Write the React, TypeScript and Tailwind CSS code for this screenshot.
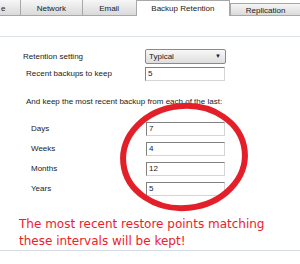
const tabs = [
  { label: "e", w: "w-[21px]", active: false },
  { label: "Network", w: "w-[62px]", active: false },
  { label: "Email", w: "w-[54px]", active: false },
  { label: "Backup Retention", w: "w-[95px]", active: true },
  { label: "Replication", w: "w-[70px]", active: false },
];

const intervals = [
  { label: "Days", value: "7" },
  { label: "Weeks", value: "4" },
  { label: "Months", value: "12" },
  { label: "Years", value: "5" },
];

const Field = ({ value, className }: { value: string; className: string }) => (
  <div
    className={`h-[14px] bg-white border border-t-[#808080] border-l-[#808080] border-r-[#d4d4d4] border-b-[#d4d4d4] flex items-center pl-[2px] ${className}`}
  >
    {value}
  </div>
);

export default function App() {
  return (
    <div
      className="relative w-[300px] h-[264px] overflow-hidden bg-white text-[8px] text-[#1a1a1a]"
      style={{ fontFamily: '"Liberation Sans", Arial, sans-serif' }}
    >
      {/* tab strip */}
      <div className="flex h-[16px] -ml-px">
        {tabs.map((t) =>
          t.active ? (
            <div
              key={t.label}
              className={`${t.w} h-[16px] bg-white border-l border-r border-t border-[#a8a8a8] flex justify-center pt-[2px] text-[8px]`}
            >
              {t.label}
            </div>
          ) : (
            <div
              key={t.label}
              className={`${t.w} ${t.label === "Replication" ? "mt-[3px] h-[13px] border-t" : "h-[16px]"} bg-gradient-to-b from-[#f6f6f6] to-[#dadada] border-l border-b border-[#a8a8a8] flex items-center justify-center pt-[2px] ${t.label === "e" ? "justify-start pl-px" : ""}`}
            >
              {t.label}
            </div>
          )
        )}
      </div>

      <div className="mt-[20px] border-t border-[#dde2e8]" />

      <div className="flex items-center h-[15px] mt-[12px]">
        <div className="w-[145px] pl-[23px]">Retention setting</div>
        <div className="w-[81px] h-[15px] rounded-[2px] border border-[#8a8a8a] bg-gradient-to-b from-[#f8f8f8] to-[#dedede] flex items-center justify-between pl-[3px] pr-[4px]">
          <span>Typical</span>
          <span className="text-[6px]">▼</span>
        </div>
      </div>

      <div className="flex items-center mt-[3px]">
        <div className="w-[145px] pl-[26px]">Recent backups to keep</div>
        <Field value="5" className="w-[80px]" />
      </div>

      <div className="pl-[26px] mt-[16px] h-[10px] leading-[10px]">
        And keep the most recent backup from each of the last:
      </div>

      <div className="flex flex-col gap-[6px] mt-[15px]">
        {intervals.map((r) => (
          <div key={r.label} className="flex items-center">
            <div className="w-[146px] pl-[31px]">{r.label}</div>
            <Field value={r.value} className="w-[79px]" />
          </div>
        ))}
      </div>

      <div
        className="mt-[20px] pl-[19px] text-[12px] leading-[17px] text-[#f0202a]"
        style={{ fontFamily: '"DejaVu Sans", Verdana, sans-serif' }}
      >
        The most recent restore points matching
        <br />
        these intervals will be kept!
      </div>

      <div className="border-t border-[#d8dde3]" />

      <svg className="absolute left-0 top-0 pointer-events-none" width="300" height="264">
        <ellipse
          cx="184"
          cy="157"
          rx="61"
          ry="51"
          fill="none"
          stroke="#e3202a"
          strokeWidth="6"
          transform="rotate(-6 184 157)"
        />
      </svg>
    </div>
  );
}
